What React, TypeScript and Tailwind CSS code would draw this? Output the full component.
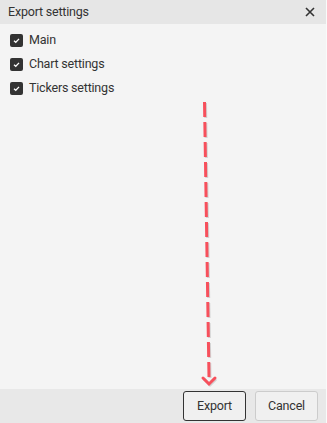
import { useState } from "react";

interface OptionRowProps {
	label: string;
	checked: boolean;
	onToggle: () => void;
}

function OptionRow(props: OptionRowProps) {
	return (
		<label className="flex flex-row items-center h-6 gap-[6px] cursor-pointer">
			<span
				className={
					props.checked
						? "w-[13px] h-[13px] rounded-[2px] bg-[#333333] flex items-center justify-center"
						: "w-[13px] h-[13px] rounded-[2px] border border-[#333333] bg-white"
				}
				onClick={props.onToggle}
			>
				{props.checked && (
					<svg width="9" height="9" viewBox="0 0 10 10">
						<path d="M2.2 5.2 L4.2 7 L7.8 3.2" fill="none" stroke="#ffffff" strokeWidth="1.4" />
					</svg>
				)}
			</span>
			<span className="text-[12.5px] tracking-[-0.2px] text-[#333333]">{props.label}</span>
		</label>
	);
}

function DashedArrow() {
	return (
		<svg
			className="absolute left-0 top-0 pointer-events-none"
			width="327"
			height="423"
			viewBox="0 0 327 423"
		>
			<g transform="translate(1,1)" stroke="#bdbdbd" strokeWidth="3" fill="none" opacity="0.6">
				<path d="M204.5 102 L209 377" strokeDasharray="15 5" />
				<path d="M203 378 L209 384 L215 378" />
			</g>
			<g stroke="#f7505c" strokeWidth="3" fill="none">
				<path d="M204.5 102 L209 377" strokeDasharray="15 5" />
				<path d="M203 378 L209 384 L215 378" strokeLinecap="round" />
			</g>
		</svg>
	);
}

export default function App() {
	const [options, setOptions] = useState([
		{ label: "Main", checked: true },
		{ label: "Chart settings", checked: true },
		{ label: "Tickers settings", checked: true },
	]);

	const toggle = (i: number) => {
		setOptions(options.map((o, j) => (j == i ? { ...o, checked: !o.checked } : o)));
	};

	return (
		<div
			className="relative w-[327px] h-[423px] flex flex-col bg-[#f4f4f4] border-r border-[#fafafa] overflow-hidden"
			style={{ fontFamily: "Roboto, 'Liberation Sans', sans-serif" }}
		>
			<div className="h-6 flex flex-row items-center justify-between pl-2 pr-2 bg-[#e6e6e6]">
				<span className="text-[12.5px] tracking-[-0.2px] text-[#333333]">Export settings</span>
				<button className="w-4 h-4 flex items-center justify-center">
					<svg width="10" height="10" viewBox="0 0 10 10">
						<path d="M1 1 L9 9 M9 1 L1 9" stroke="#333333" strokeWidth="1.6" />
					</svg>
				</button>
			</div>
			<div className="flex-1 flex flex-col pt-[4px] px-[10px]">
				{options.map((o, i) => (
					<OptionRow key={o.label} label={o.label} checked={o.checked} onToggle={() => toggle(i)} />
				))}
			</div>
			<div className="h-[34px] flex flex-row items-center justify-end gap-[9px] pr-[8px] bg-[#e8e8e8]">
				<button className="w-[63px] h-[30px] rounded-[3px] border border-[#333333] bg-[#f0f0f0] text-[12.5px] tracking-[-0.2px] text-[#333333]">
					Export
				</button>
				<button className="w-[63px] h-[30px] rounded-[3px] border border-[#cccccc] bg-[#f0f0f0] text-[12.5px] tracking-[-0.2px] text-[#333333]">
					Cancel
				</button>
			</div>
			<DashedArrow />
		</div>
	);
}
